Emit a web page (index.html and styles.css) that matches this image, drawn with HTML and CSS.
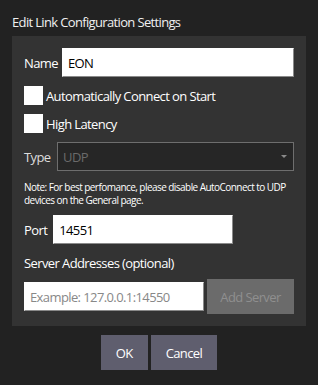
FILE: index.html
```html
<!DOCTYPE html>
<html lang="en">

<head>
    <meta charset="UTF-8">
    <meta name="viewport" content="width=device-width, initial-scale=1.0">
    <title>Edit Link Configuration Settings</title>

    <link rel="stylesheet" href="styles.css">
</head>

<body>
    <div class="dialog">
        <h1>Edit Link Configuration Settings</h1>
        <div class="panel">
            <div class="row">
                <label for="name">Name</label>
                <input type="text" id="name" class="field wide" value="EON">
            </div>
            <label class="check"><span class="box"></span>Automatically Connect on Start</label>
            <label class="check"><span class="box"></span>High Latency</label>
            <div class="row type-row">
                <label>Type</label>
                <div class="select">
                    <span>UDP</span>
                    <span class="arrow"></span>
                </div>
            </div>
            <p class="note">Note: For best perfomance, please disable AutoConnect to UDP devices on the General page.</p>
            <div class="row">
                <label for="port">Port</label>
                <input type="text" id="port" class="field port" value="14551">
            </div>
            <div class="section-label">Server Addresses (optional)</div>
            <div class="row server-row">
                <input type="text" class="field server" placeholder="Example: 127.0.0.1:14550">
                <button class="add-btn">Add Server</button>
            </div>
        </div>
        <div class="actions">
            <button class="btn">OK</button>
            <button class="btn">Cancel</button>
        </div>
    </div>
</body>

</html>
```

FILE: styles.css
```css
body {
    font-family: "Open Sans", sans-serif;
    letter-spacing: -0.6px;
    background-color: #222222;
    color: #ffffff;
    margin: 0;
    padding: 0;
}

.dialog {
    padding: 12px;
}

h1 {
    font-size: 13px;
    font-weight: normal;
    letter-spacing: -0.65px;
    margin: 1px 0 5px 0;
    line-height: 18px;
    color: #f0f0f0;
}

.panel {
    background-color: #333333;
    padding: 12px;
    font-size: 13px;
}

.row {
    display: flex;
    align-items: center;
    gap: 4px;
}

.row label {
    white-space: nowrap;
}

.field {
    font-family: "Open Sans", sans-serif;
    letter-spacing: -0.6px;
    font-size: 13px;
    height: 29px;
    box-sizing: border-box;
    border: 1px solid #ffffff;
    border-right-color: #8a8a8a;
    border-bottom-color: #8a8a8a;
    background-color: #ffffff;
    color: #000000;
    padding: 0 5px;
    outline: none;
}

.wide {
    width: 237px;
    margin-left: auto;
}

.check {
    display: flex;
    align-items: center;
    gap: 3px;
    height: 19px;
    margin-top: 9px;
}

.check .box {
    display: inline-block;
    width: 19px;
    height: 19px;
    background-color: #ffffff;
}

.type-row {
    margin-top: 9px;
}

.type-row label {
    color: #dddddd;
}

.select {
    width: 237px;
    margin-left: auto;
    height: 29px;
    box-sizing: border-box;
    background-color: #262626;
    border: 1px solid #6e6e6e;
    display: flex;
    align-items: center;
    justify-content: space-between;
    padding: 0 6px 0 5px;
    color: #6a6a6a;
}

.arrow {
    width: 0;
    height: 0;
    border-left: 3px solid transparent;
    border-right: 3px solid transparent;
    border-top: 3px solid #8a8a8a;
}

.note {
    font-size: 10px;
    letter-spacing: -0.55px;
    line-height: 13px;
    margin: 10px 0 8px 0;
}

.port {
    width: 180px;
    margin-left: 2px;
}

.section-label {
    margin-top: 10px;
    line-height: 18px;
}

.server-row {
    margin-top: 7px;
    gap: 3px;
}

.server {
    width: 180px;
}

.server::placeholder {
    color: #888888;
}

.add-btn {
    flex: 1;
    height: 35px;
    border: none;
    background-color: #6b6b6b;
    color: #8f8f8f;
    font-family: "Open Sans", sans-serif;
    letter-spacing: -0.6px;
    font-size: 13px;
}

.actions {
    display: flex;
    justify-content: center;
    gap: 3px;
    margin-top: 9px;
}

.btn {
    height: 35px;
    border: none;
    background-color: #5f5e6e;
    color: #ffffff;
    font-family: "Open Sans", sans-serif;
    letter-spacing: -0.6px;
    font-size: 13px;
    padding: 0 15px;
}
```
